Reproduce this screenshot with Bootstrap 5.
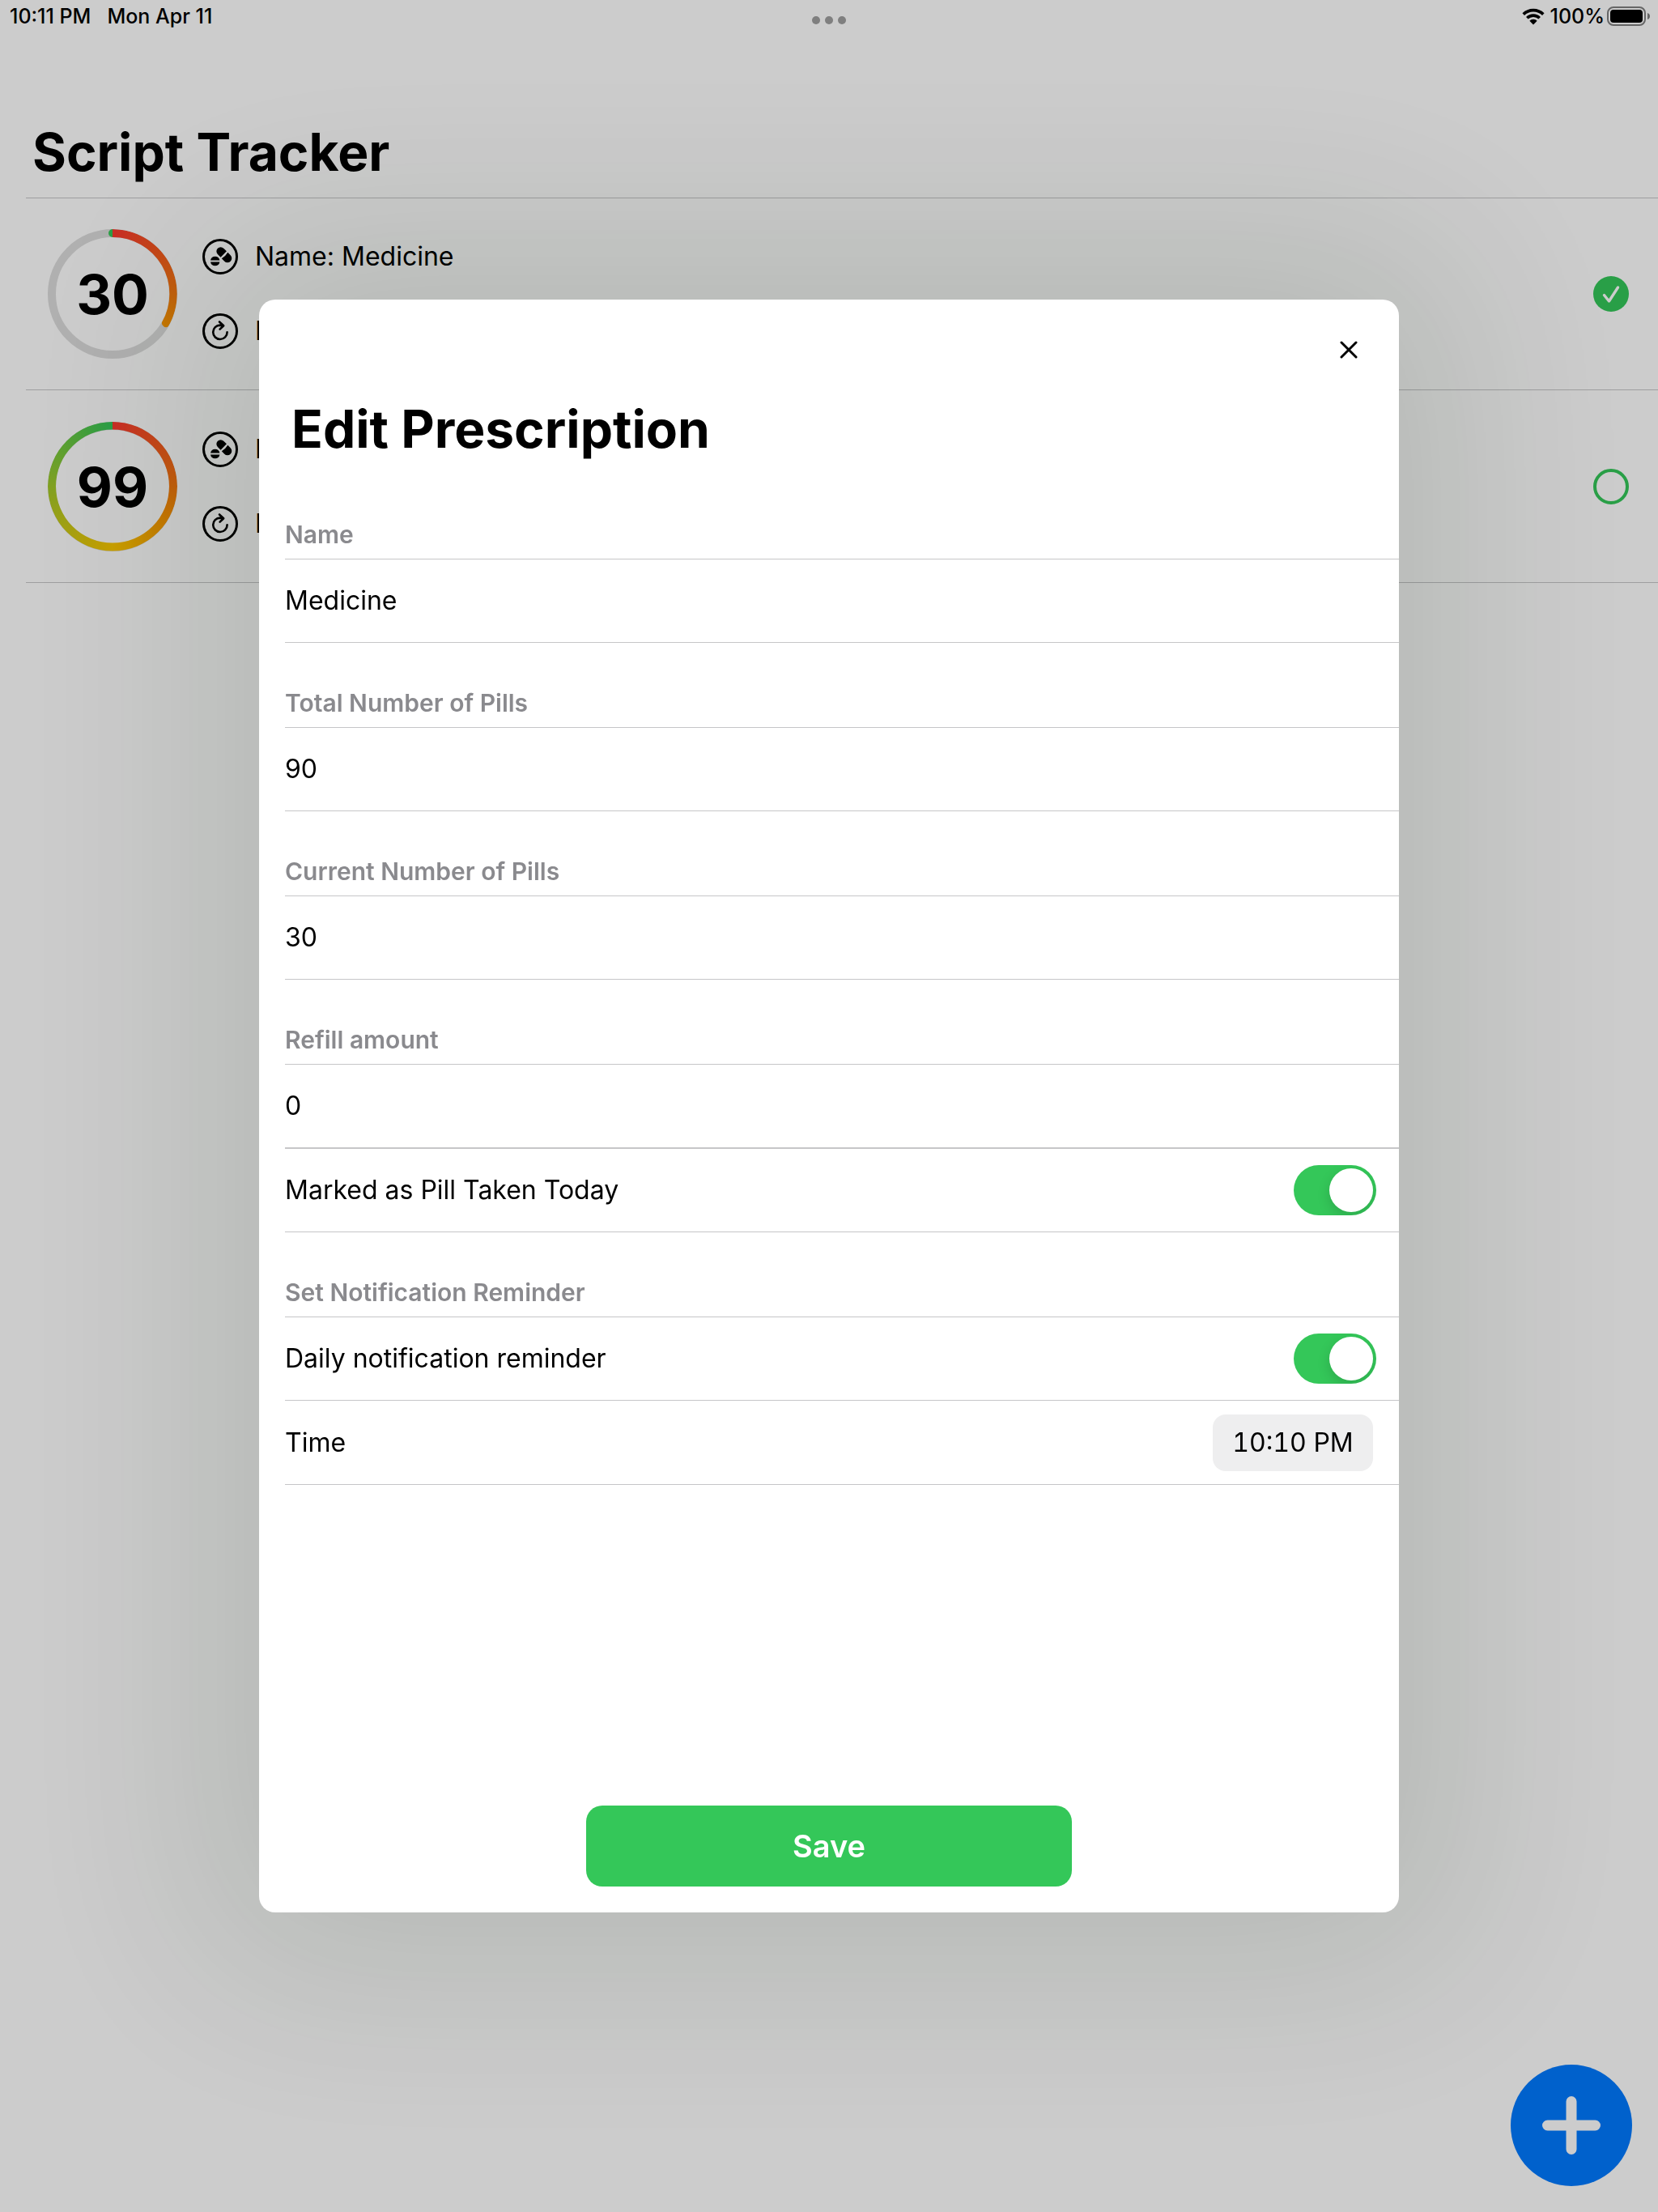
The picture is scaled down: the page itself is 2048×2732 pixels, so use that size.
<!DOCTYPE html>
<html lang="en">
<head>
<meta charset="utf-8">
<meta name="viewport" content="width=device-width, initial-scale=1">
<title>Script Tracker</title>
<link href="https://cdn.jsdelivr.net/npm/bootstrap@5.3.0/dist/css/bootstrap.min.css" rel="stylesheet">
<style>
  body { font-family: Inter, "Liberation Sans", sans-serif; color: #000; font-size: 32px; line-height: 40px; background: #fff; min-height: 100vh; }
  .status-bar { height: 40px; padding: 0 9px; font-size: 25px; line-height: 40px; font-weight: 500; }
  .status-side { flex: 1 1 0; }
  .status-left { gap: 17px; text-indent: 3px; }
  .status-right { gap: 3px; }
  .grab-dots { gap: 6px; padding-top: 10px; }
  .grab-dots span { width: 10px; height: 10px; border-radius: 50%; background: #9f9f9f; }
  .page-title { font-size: 64px; line-height: 80px; font-weight: 700; margin: 108px 0 16px; padding-left: 40px; }
  .rx-list { margin-left: 32px; border-top: 1px solid #c6c6c8; }
  .rx-item { min-height: 237px; padding: 0 36px 0 27px; border-bottom: 1px solid #c6c6c8; }
  .rx-item + .rx-item { min-height: 238px; }
  .ring { width: 160px; height: 160px; border-radius: 50%; border: 10px solid #dcdcdc; position: relative; }
  .ring-arc { position: absolute; inset: -10px; border-radius: 50%; background: conic-gradient(#fb392f, #f2780f 25%, #f79600 34%, #fbc800 50%, #a2c92a 75%, #34c759); }
  .arc-third { clip-path: path("M80 0A80 80 0 0 1 149 120A5 5 0 0 1 141 115A70 70 0 0 0 80 10A5 5 0 0 1 80 0Z"); }
  .arc-full { clip-path: path(evenodd, "M80 0A80 80 0 0 1 80 160A80 80 0 0 1 80 0ZM80 10A70 70 0 0 1 80 150A70 70 0 0 1 80 10Z"); }
  .ring strong { font-size: 68px; line-height: 80px; }
  .rx-info { gap: 48px; margin-left: 31px; }
  .rx-line { gap: 21px; line-height: 44px; }
  .tick-btn { line-height: 0; }
  .fab { right: 32px; bottom: 32px; width: 150px; height: 150px; background: #007aff; z-index: 10; }
  .dim { background: rgba(0,0,0,.2); z-index: 1040; }
  .sheet-wrap { --bs-modal-margin: 0px; }
  .sheet-dialog { width: 1440px; }
  .sheet { min-height: 1992px; border: 0; border-radius: 20px; box-shadow: 0 0 320px 80px rgba(13,36,13,.115); }
  .sheet-top { padding: 32px 32px 0; }
  .close-btn { width: 60px; height: 60px; line-height: 0; }
  .sheet-title { font-size: 64px; line-height: 80px; font-weight: 700; margin: 28px 0 16px; padding-left: 40px; }
  .group-head { min-height: 104px; padding-bottom: 12px; font-size: 30px; line-height: 36px; font-weight: 600; color: #8a8a8e; }
  .sheet-form { padding-left: 32px; }
  .form-line { min-height: 104px; border-top: 1px solid #c6c6c8; border-bottom: 1px solid #c6c6c8; padding-right: 32px; }
  .form-line.joined { border-top: 0; }
  .line-input { border: 0; padding: 0; width: 100%; font: inherit; line-height: 40px; color: #000; background: none; outline: 0; }
  .toggle-box { padding-right: 28px; }
  .toggle { appearance: none; flex: none; width: 102px; height: 62px; border-radius: 31px; background: #34c759; padding: 4px; margin: 0; overflow: hidden; display: flex; justify-content: flex-end; }
  .toggle::before { content: ""; width: 54px; height: 54px; border-radius: 50%; background: #fff; box-shadow: 0 6px 16px rgba(0,0,0,.15); }
  .toggle:not(:checked) { background: #e9e9eb; justify-content: flex-start; }
  .time-btn { width: 198px; height: 70px; border: 0; border-radius: 16px; background: #eeeeef; color: #000; font-variant-numeric: tabular-nums; }
  .save-btn { width: 600px; max-width: 90%; height: 100px; border: 0; border-radius: 20px; background: #34c759; color: #fff; font-size: 38px; font-weight: 600; margin-bottom: 32px; }
</style>
<script src="https://cdn.jsdelivr.net/npm/bootstrap@5.3.0/dist/js/bootstrap.bundle.min.js"></script>
</head>
<body>
<svg width="0" height="0" class="position-absolute" aria-hidden="true">
  <symbol id="i-pills" viewBox="-22 -22 44 44">
    <circle r="20.5" fill="none" stroke="#000" stroke-width="3"/>
    <g transform="translate(4.8 -2.4) rotate(45)">
      <path d="M-.8 -5.2V5.2H-6A5.2 5.2 0 0 1 -6 -5.2ZM1.2 -5.2H6A5.3 5.3 0 0 1 6 5.4H1.2Q2.6 0 1.2 -5.2Z"/>
    </g>
    <path d="M-12 4.6A5.8 5.8 0 0 1 -.6 4.6ZM-12 6.4H-.6A5.8 5.8 0 0 1 -12 6.4Z"/>
  </symbol>
  <symbol id="i-refill" viewBox="-22 -22 44 44">
    <g fill="none" stroke="#000" stroke-linecap="round" stroke-linejoin="round">
      <circle r="20.5" stroke-width="3"/>
      <path stroke-width="2.6" d="M8.6 1.2A8.7 8.7 0 1 1 -.1 -7.4L4 -6.8M-1 -11.5L4.2 -6.8L-.4 -2.4"/>
    </g>
  </symbol>
</svg>

<header class="status-bar d-flex align-items-center">
  <div class="status-side status-left d-flex"><span>10:11 PM</span><span>Mon Apr 11</span></div>
  <div class="grab-dots d-flex"><span></span><span></span><span></span></div>
  <div class="status-side status-right d-flex justify-content-end align-items-center">
    <svg class="me-1" width="28" height="21" viewBox="0 0 28 21" aria-label="Wi-Fi"><g fill="none" stroke="#000" stroke-width="3.6"><path d="M1.7 7.6A17.6 17.6 0 0 1 26.3 7.6"/><path d="M6.3 12.3A11 11 0 0 1 21.7 12.3"/></g><path d="M14 20.4L9.3 15.7A6.6 6.6 0 0 1 18.7 15.7Z"/></svg>
    <span>100%</span>
    <svg width="54" height="24" viewBox="0 0 54 24" aria-label="Battery"><rect x="1" y="1" width="46" height="22" rx="7" fill="none" stroke="#808080" stroke-width="2"/><rect x="4" y="4" width="40" height="16" rx="4"/><path d="M50 8Q53 9 53 12T50 16Z" fill="#808080"/></svg>
  </div>
</header>

<main>
  <h1 class="page-title">Script Tracker</h1>
  <ul class="rx-list list-unstyled mb-0">
    <li class="rx-item d-flex align-items-center">
      <div class="ring d-flex align-items-center justify-content-center"><div class="ring-arc arc-third"></div><strong>30</strong></div>
      <div class="rx-info d-flex flex-column">
        <div class="rx-line d-flex align-items-center"><svg width="44" height="44"><use href="#i-pills"/></svg><span>Name: Medicine</span></div>
        <div class="rx-line d-flex align-items-center"><svg width="44" height="44"><use href="#i-refill"/></svg><span>R:</span></div>
      </div>
      <button type="button" class="tick-btn btn p-0 border-0 ms-auto" aria-label="Taken today">
        <svg width="44" height="44" viewBox="0 0 44 44"><circle cx="22" cy="22" r="22" fill="#34c759"/><path d="M13.5 23.5L19.5 31L30.5 14" fill="none" stroke="#fff" stroke-width="3.4" stroke-linecap="round" stroke-linejoin="round"/></svg>
      </button>
    </li>
    <li class="rx-item d-flex align-items-center">
      <div class="ring d-flex align-items-center justify-content-center"><div class="ring-arc arc-full"></div><strong>99</strong></div>
      <div class="rx-info d-flex flex-column">
        <div class="rx-line d-flex align-items-center"><svg width="44" height="44"><use href="#i-pills"/></svg><span>N:</span></div>
        <div class="rx-line d-flex align-items-center"><svg width="44" height="44"><use href="#i-refill"/></svg><span>R:</span></div>
      </div>
      <button type="button" class="tick-btn btn p-0 border-0 ms-auto" aria-label="Not taken today">
        <svg width="44" height="44" viewBox="0 0 44 44"><circle cx="22" cy="22" r="20" fill="none" stroke="#34c759" stroke-width="4"/></svg>
      </button>
    </li>
  </ul>
</main>

<button type="button" class="fab btn rounded-circle border-0 p-0 position-fixed d-flex align-items-center justify-content-center" aria-label="Add prescription">
  <svg width="72" height="72" viewBox="0 0 72 72"><path d="M36 6.5V65.5M6.5 36H65.5" stroke="#fff" stroke-width="13" stroke-linecap="round"/></svg>
</button>

<div class="dim position-fixed top-0 start-0 w-100 h-100"></div>

<div class="modal d-block sheet-wrap" role="dialog" aria-labelledby="sheetTitle">
  <div class="modal-dialog modal-dialog-centered mw-100 px-3 mx-auto my-0 sheet-dialog">
    <form class="modal-content sheet">
      <div class="sheet-top d-flex justify-content-end">
        <button type="button" class="close-btn btn p-0 border-0" aria-label="Close">
          <svg width="22" height="22" viewBox="0 0 22 22"><path d="M2 2L20 20M20 2L2 20" stroke="#000" stroke-width="3" stroke-linecap="round"/></svg>
        </button>
      </div>
      <h2 class="sheet-title" id="sheetTitle">Edit Prescription</h2>
      <div class="sheet-form">
        <label class="group-head d-flex align-items-end" for="fName">Name</label>
        <div class="form-line d-flex align-items-center"><input class="line-input" id="fName" type="text" value="Medicine"></div>
        <label class="group-head d-flex align-items-end" for="fTotal">Total Number of Pills</label>
        <div class="form-line d-flex align-items-center"><input class="line-input" id="fTotal" type="text" inputmode="numeric" value="90"></div>
        <label class="group-head d-flex align-items-end" for="fCurrent">Current Number of Pills</label>
        <div class="form-line d-flex align-items-center"><input class="line-input" id="fCurrent" type="text" inputmode="numeric" value="30"></div>
        <label class="group-head d-flex align-items-end" for="fRefill">Refill amount</label>
        <div class="form-line d-flex align-items-center"><input class="line-input" id="fRefill" type="text" inputmode="numeric" value="0"></div>
        <div class="form-line toggle-box d-flex align-items-center justify-content-between"><label for="fTaken">Marked as Pill Taken Today</label><input class="toggle" id="fTaken" type="checkbox" role="switch" checked></div>
        <div class="group-head d-flex align-items-end">Set Notification Reminder</div>
        <div class="form-line toggle-box d-flex align-items-center justify-content-between"><label for="fDaily">Daily notification reminder</label><input class="toggle" id="fDaily" type="checkbox" role="switch" checked></div>
        <div class="form-line joined d-flex align-items-center justify-content-between"><label for="fTime">Time</label><button class="time-btn" id="fTime" type="button">10:10 PM</button></div>
      </div>
      <button type="submit" class="save-btn btn mt-auto mx-auto">Save</button>
    </form>
  </div>
</div>
</body>
</html>
